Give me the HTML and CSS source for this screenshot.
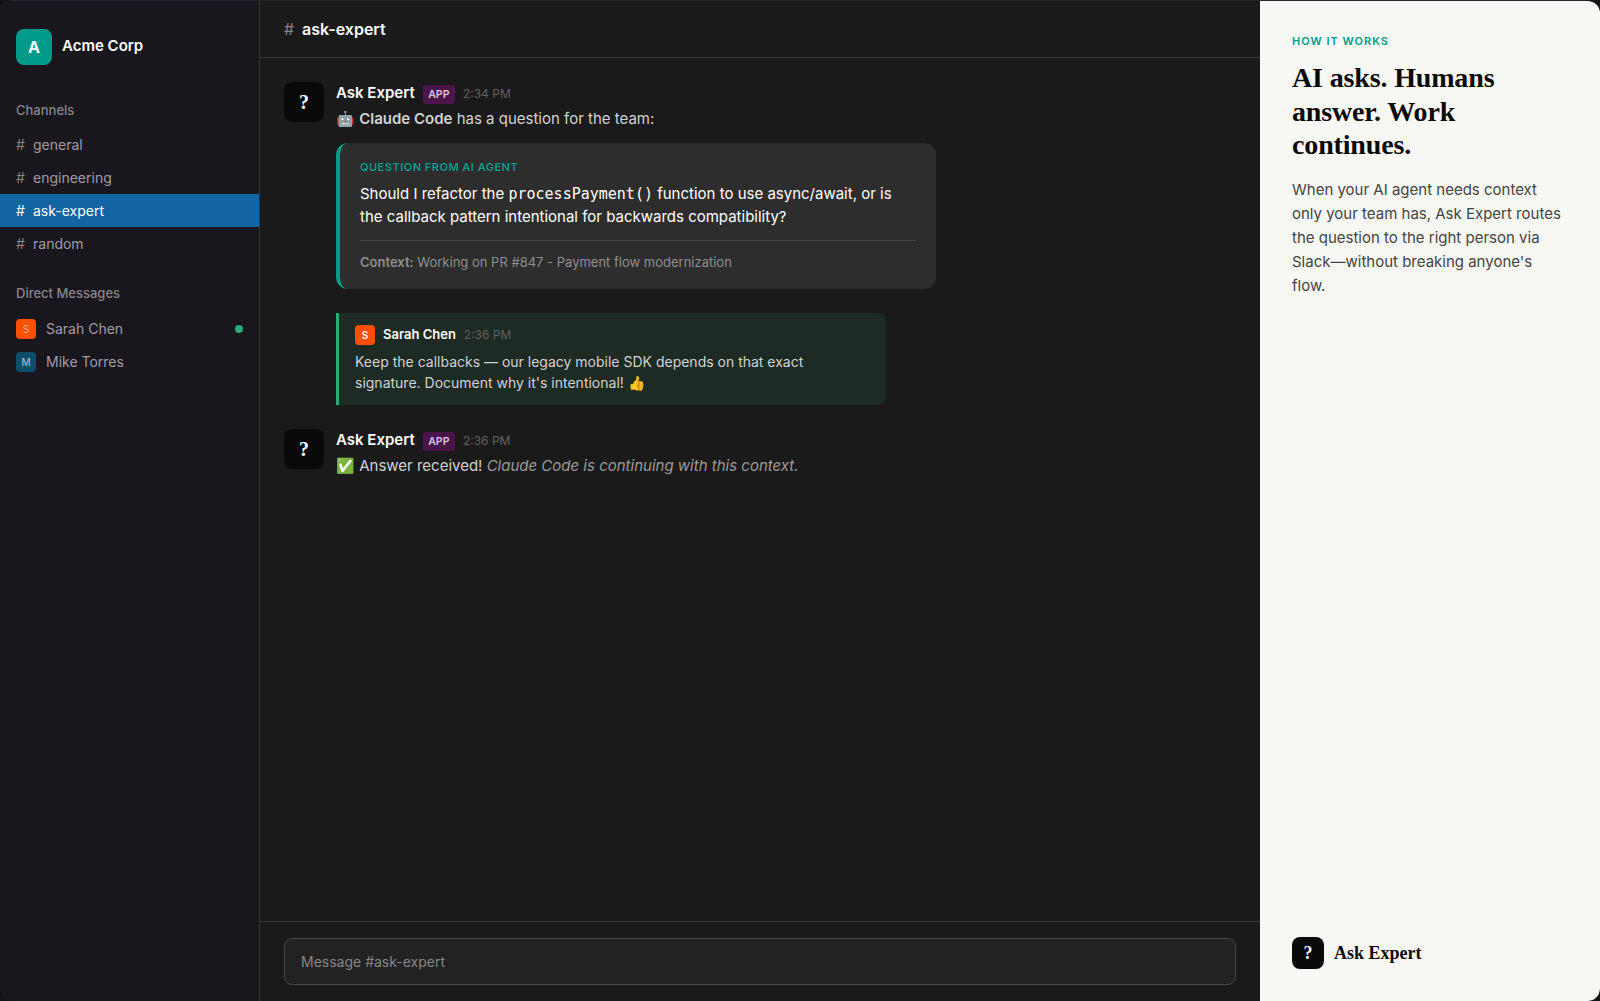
FILE: index.html
```html
<!DOCTYPE html>
<html lang="en">
<head>
  <meta charset="UTF-8" />
  <title>Ask Expert</title>
  <link rel="stylesheet" href="styles.css">
</head>
<body>
  <div class="app">
    <aside class="sidebar">
      <div class="workspace">
        <div class="workspace-icon">A</div>
        <span class="workspace-name">Acme Corp</span>
      </div>

      <div class="section-title">Channels</div>
      <div class="channel"><span class="hash">#</span>general</div>
      <div class="channel"><span class="hash">#</span>engineering</div>
      <div class="channel active"><span class="hash">#</span>ask-expert</div>
      <div class="channel"><span class="hash">#</span>random</div>

      <div class="section-title dm-title">Direct Messages</div>
      <div class="dm">
        <span class="dm-avatar sarah">S</span>
        <span class="dm-name">Sarah Chen</span>
        <span class="online"></span>
      </div>
      <div class="dm">
        <span class="dm-avatar mike">M</span>
        <span class="dm-name">Mike Torres</span>
      </div>
    </aside>

    <main class="chat">
      <header class="chat-header"><span class="hash">#</span>ask-expert</header>

      <div class="messages">
        <div class="message">
          <div class="bot-avatar">?</div>
          <div class="message-content">
            <div class="message-head">
              <span class="author">Ask Expert</span>
              <span class="app-badge">APP</span>
              <span class="time">2:34 PM</span>
            </div>
            <div class="message-text">🤖 <strong>Claude Code</strong> has a question for the team:</div>

            <div class="question-card">
              <div class="question-label">QUESTION FROM AI AGENT</div>
              <div class="question-text">Should I refactor the <code>processPayment()</code> function to use async/await, or is the callback pattern intentional for backwards compatibility?</div>
              <div class="question-context"><strong>Context:</strong> Working on PR #847 - Payment flow modernization</div>
            </div>

            <div class="reply">
              <div class="reply-head">
                <span class="reply-avatar">S</span>
                <span class="reply-author">Sarah Chen</span>
                <span class="time">2:36 PM</span>
              </div>
              <div class="reply-text">Keep the callbacks — our legacy mobile SDK depends on that exact signature. Document why it's intentional! 👍</div>
            </div>
          </div>
        </div>

        <div class="message">
          <div class="bot-avatar">?</div>
          <div class="message-content">
            <div class="message-head">
              <span class="author">Ask Expert</span>
              <span class="app-badge">APP</span>
              <span class="time">2:36 PM</span>
            </div>
            <div class="message-text">✅ Answer received! <em>Claude Code is continuing with this context.</em></div>
          </div>
        </div>
      </div>

      <div class="composer">
        <div class="composer-input">Message #ask-expert</div>
      </div>
    </main>

    <aside class="info-panel">
      <div class="info-top">
        <div class="info-label">HOW IT WORKS</div>
        <h2 class="info-title">AI asks. Humans answer. Work continues.</h2>
        <p class="info-text">When your AI agent needs context only your team has, Ask Expert routes the question to the right person via Slack—without breaking anyone's flow.</p>
      </div>
      <div class="brand">
        <div class="brand-icon">?</div>
        <span class="brand-name">Ask Expert</span>
      </div>
    </aside>
  </div>
</body>
</html>
```

FILE: styles.css
```css
* {
  box-sizing: border-box;
}

html, body {
  height: 100%;
}

body {
  margin: 0;
  background: #141414;
  font-family: Inter, 'Noto Sans', sans-serif;
  color: #fff;
  overflow: hidden;
}

.app {
  display: flex;
  height: 1001px;
  border-top: 1px solid #262626;
  border-radius: 12px;
  overflow: hidden;
}

/* sidebar */

.sidebar {
  width: 260px;
  flex-shrink: 0;
  background: #19171d;
  border-right: 1px solid #38383a;
  padding-top: 28px;
}

.workspace {
  display: flex;
  align-items: center;
  gap: 10px;
  padding: 0 16px;
  margin-bottom: 37px;
}

.workspace-icon {
  width: 36px;
  height: 36px;
  border-radius: 8px;
  background: #009a8a;
  display: flex;
  align-items: center;
  justify-content: center;
  font-size: 16px;
  font-weight: 700;
}

.workspace-name {
  font-size: 15px;
  font-weight: 600;
  margin-bottom: 3px;
}

.section-title {
  padding: 0 16px;
  font-size: 13px;
  line-height: 16px;
  font-weight: 500;
  color: #87858b;
  margin-bottom: 10px;
}

.dm-title {
  margin-top: 25px;
  margin-bottom: 11px;
}

.channel {
  display: flex;
  align-items: center;
  height: 33px;
  padding: 0 16px;
  font-size: 14px;
  color: #a29ba6;
}

.channel .hash {
  width: 17px;
  color: #87858b;
}

.channel.active {
  background: #1264a3;
  color: #fff;
}

.channel.active .hash {
  color: #fff;
}

.dm {
  display: flex;
  align-items: center;
  height: 33px;
  padding: 0 16px;
  font-size: 14px;
  color: #a29ba6;
}

.dm-avatar {
  width: 20px;
  height: 20px;
  border-radius: 4px;
  margin-right: 10px;
  display: flex;
  align-items: center;
  justify-content: center;
  font-size: 10px;
  font-weight: 500;
}

.dm-avatar.sarah {
  background: #ff4f00;
  color: #f3a37f;
}

.dm-avatar.mike {
  background: #0d4f6b;
  color: #9fb4bf;
}

.online {
  width: 8px;
  height: 8px;
  border-radius: 50%;
  background: #2bac76;
  margin-left: auto;
}

/* main chat */

.chat {
  flex: 1;
  min-width: 0;
  background: #1a1a1a;
  display: flex;
  flex-direction: column;
}

.chat-header {
  height: 57px;
  flex-shrink: 0;
  display: flex;
  align-items: center;
  padding: 0 24px;
  border-bottom: 1px solid #383838;
  font-size: 16px;
  font-weight: 600;
}

.chat-header .hash {
  width: 18px;
  color: #87858b;
  font-weight: 400;
}

.messages {
  flex: 1;
  padding: 24px;
}

.message {
  display: flex;
  gap: 12px;
  margin-bottom: 24px;
}

.bot-avatar {
  width: 40px;
  height: 40px;
  flex-shrink: 0;
  border-radius: 8px;
  background: #0a0a0a;
  display: flex;
  align-items: center;
  justify-content: center;
  font-family: 'Liberation Serif', serif;
  font-size: 20px;
  font-weight: 700;
}

.message-head {
  display: flex;
  align-items: center;
  gap: 8px;
  height: 22px;
}

.author {
  font-size: 15px;
  font-weight: 600;
  margin-bottom: 2px;
}

.app-badge {
  background: #4a154b;
  color: #e0c3e0;
  font-size: 10.5px;
  font-weight: 600;
  padding: 3px 5.5px;
  border-radius: 3px;
  line-height: 13px;
  margin-top: 3px;
}

.time {
  font-size: 12px;
  color: #616161;
}

.message-text {
  font-size: 15px;
  line-height: 22px;
  margin-top: 4px;
  color: #d1d2d3;
}

.message-text strong {
  font-weight: 600;
}

.message-text em {
  color: #9a9a9a;
}

.question-card {
  width: 600px;
  margin-top: 13px;
  background: #2d2d2d;
  border-left: 4px solid #009a8a;
  border-radius: 12px;
  padding: 17px 20px;
}

.question-label {
  font-size: 11px;
  line-height: 15px;
  font-weight: 600;
  letter-spacing: 0.5px;
  color: #009a8a;
  margin-bottom: 7px;
}

.question-text {
  font-size: 15px;
  line-height: 23px;
  color: #fff;
}

code {
  font-family: 'DejaVu Sans Mono', monospace;
  font-size: 15px;
  line-height: 1;
}

.question-context {
  margin-top: 12px;
  padding-top: 11px;
  border-top: 1px solid #444;
  font-size: 13px;
  line-height: 20px;
  color: #8f8f8f;
}

.question-context strong {
  font-weight: 600;
}

.reply {
  width: 550px;
  margin-top: 24px;
  background: #1e2a24;
  border-left: 3px solid #2bac76;
  border-radius: 0 8px 8px 0;
  padding: 12px 16px;
}

.reply-head {
  display: flex;
  align-items: center;
  height: 20px;
  margin-bottom: 6px;
}

.reply-head .time {
  margin-bottom: 1px;
}

.reply-avatar {
  width: 20px;
  height: 20px;
  border-radius: 4px;
  background: #ff4f00;
  margin-right: 8px;
  display: flex;
  align-items: center;
  justify-content: center;
  font-size: 10px;
  font-weight: 600;
}

.reply-author {
  font-size: 13px;
  font-weight: 600;
  margin-right: 8px;
  margin-bottom: 2px;
}

.reply-text {
  font-size: 14px;
  line-height: 21px;
  color: #d1d2d3;
}

.composer {
  padding: 16px 24px;
  border-top: 1px solid #383838;
}

.composer-input {
  height: 47px;
  display: flex;
  align-items: center;
  padding: 0 16px;
  background: #222;
  border: 1px solid #484848;
  border-radius: 8px;
  font-size: 14px;
  color: #868686;
}

/* right panel */

.info-panel {
  width: 340px;
  flex-shrink: 0;
  background: #f7f7f3;
  color: #0a0a0a;
  padding: 33px 32px 32px;
  display: flex;
  flex-direction: column;
  justify-content: space-between;
  border-radius: 0 12px 12px 0;
}

.info-label {
  font-size: 11px;
  line-height: 14px;
  font-weight: 600;
  letter-spacing: 1px;
  color: #009a8a;
  margin-bottom: 13px;
}

.info-title {
  margin: 0 0 16px;
  font-family: 'Liberation Serif', serif;
  font-size: 28px;
  line-height: 33.6px;
  font-weight: 700;
  letter-spacing: -0.15px;
  color: #0a0a0a;
}

.info-text {
  margin: 0;
  font-size: 15px;
  line-height: 24px;
  color: #444;
}

.brand {
  display: flex;
  align-items: center;
  gap: 10px;
}

.brand-icon {
  width: 32px;
  height: 32px;
  border-radius: 8px;
  background: #0a0a0a;
  color: #f7f7f3;
  display: flex;
  align-items: center;
  justify-content: center;
  font-family: 'Liberation Serif', serif;
  font-size: 18px;
  font-weight: 700;
}

.brand-name {
  font-family: 'Liberation Serif', serif;
  font-size: 18px;
  font-weight: 700;
}
```
